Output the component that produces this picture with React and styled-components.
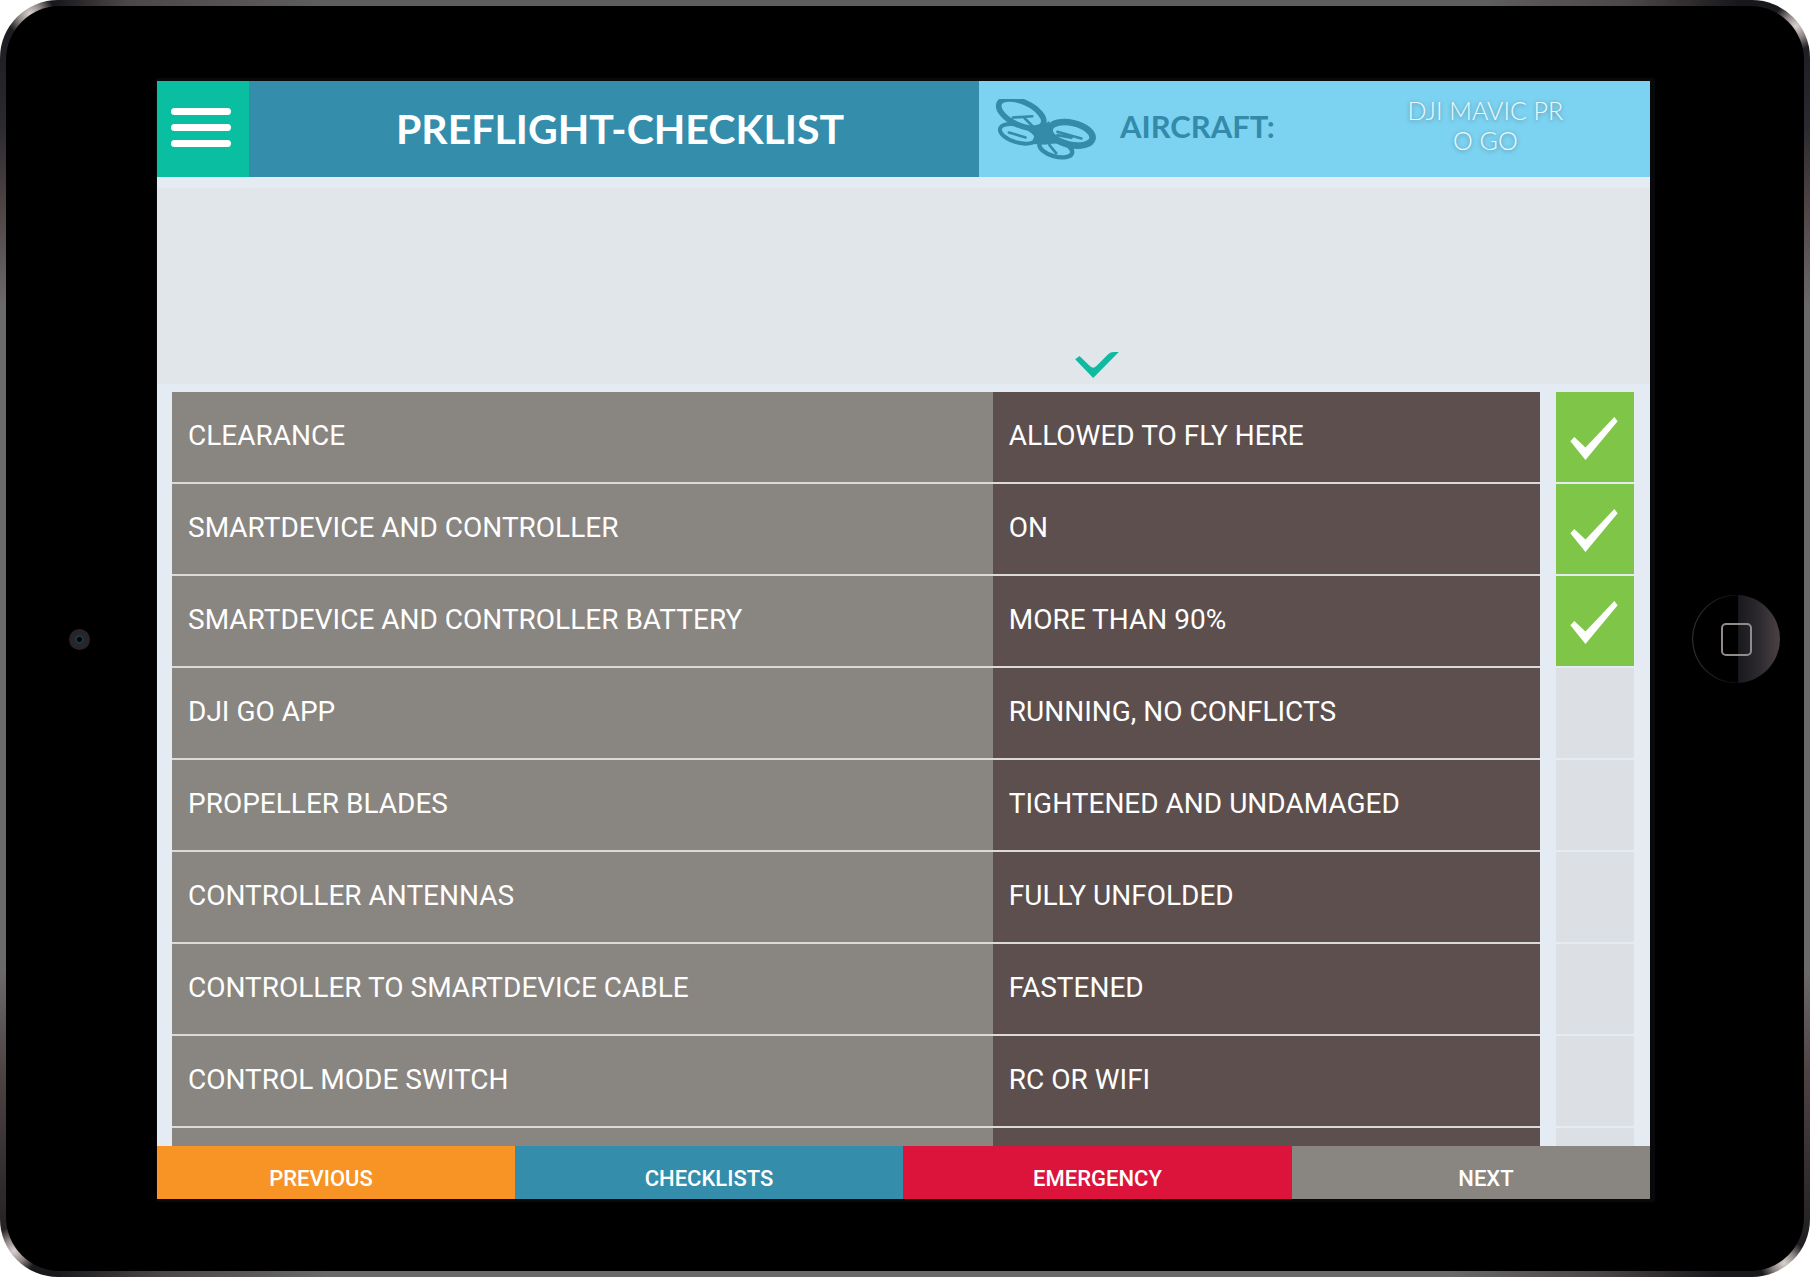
import React, { useState } from "react";
import styled, { createGlobalStyle } from "styled-components";

const GlobalStyle = createGlobalStyle`
  * {
    box-sizing: border-box;
  }

  body {
    margin: 0;
    background: #ffffff;
    font-family: Roboto, "Liberation Sans", sans-serif;
  }

  button {
    margin: 0;
    padding: 0;
    border: 0;
    font: inherit;
    color: inherit;
    cursor: pointer;
  }
`;

const Device = styled.div`
  display: flex;
  height: 100vh;
  padding: 6px;
  border-radius: 58px;
  background:
    radial-gradient(circle at 30px 14px, #d8d2d0 0, #8d8684 12px, transparent 24px),
    radial-gradient(circle at calc(100% - 14px) 26px, #d8d2d0 0, #8d8684 12px, transparent 24px),
    radial-gradient(circle at 14px calc(100% - 26px), #d8d2d0 0, #8d8684 12px, transparent 24px),
    radial-gradient(circle at calc(100% - 26px) calc(100% - 14px), #d8d2d0 0, #8d8684 12px, transparent 24px),
    linear-gradient(90deg, #18171c 3%, #4d4646 7%, #5f5d60 18%, #5f5d60 82%, #4d4646 90%, #18171c 96%) top / 100% 6px no-repeat,
    linear-gradient(90deg, #18171c 3%, #4d4646 9%, #69686b 18%, #69686b 80%, #4d4646 88%, #18171c 95%) bottom / 100% 6px no-repeat,
    linear-gradient(180deg, #18171c 0, #2c2a30 10%, #4d4343 16%, #6c696b 24%, #6c696b 76%, #4d4343 84%, #18171c 100%);
`;

const Bezel = styled.div`
  display: grid;
  grid-template-columns: 151px minmax(0, 1fr) 154px;
  flex: 1;
  min-width: 0;
  padding: 75px 0 72px;
  border-radius: 54px;
  background: #000000;
`;

const Side = styled.div`
  display: flex;
  align-items: center;
  justify-content: center;
`;

const LeftSide = styled(Side)`
  padding: 0 4px 2px 0;
`;

const RightSide = styled(Side)`
  padding: 0 0 2px 18px;
`;

const Camera = styled.div`
  width: 21px;
  height: 21px;
  border-radius: 50%;
  background: radial-gradient(
    circle,
    #000000 0 2px,
    #1d3a45 3px,
    #29262a 5px,
    #242226 100%
  );
`;

const HomeButton = styled.button`
  display: flex;
  align-items: center;
  justify-content: center;
  width: 88px;
  height: 88px;
  border-radius: 50%;
  box-shadow: inset 1px 0 1px #3a373b;
  background: linear-gradient(
    90deg,
    #000000 52%,
    #1a191e 53%,
    #2b292e 75%,
    #4b4143 100%
  );

  span {
    width: 31px;
    height: 33px;
    border: 2px solid #918b89;
    border-radius: 5px;
  }
`;

const Screen = styled.main`
  display: flex;
  flex-direction: column;
  min-height: 0;
  overflow: hidden;
  background: #e5ebf3;
  box-shadow: 2px 0 0 3px #09090c;
`;

const Header = styled.header`
  display: grid;
  grid-template-columns: 92px minmax(0, 730fr) minmax(0, 671fr);
  flex: none;
  min-height: 96px;
`;

const MenuButton = styled.button`
  display: flex;
  flex-direction: column;
  align-items: center;
  justify-content: center;
  gap: 9px;
  padding: 0 4px 4px 0;
  background: #0abfa1;

  span {
    width: 60px;
    height: 7px;
    border-radius: 4px;
    background: #ffffff;
  }
`;

const Title = styled.h1`
  display: flex;
  align-items: center;
  justify-content: center;
  margin: 0;
  padding: 0 0 2px 12px;
  background: #338dab;
  color: #ffffff;
  font-family: Lato, sans-serif;
  font-size: 41px;
  font-weight: 700;
`;

const Aircraft = styled.div`
  display: flex;
  align-items: center;
  padding-left: 16px;
  background: #7cd3f1;
  font-family: Lato, sans-serif;

  svg {
    flex: none;
    width: 101px;
    height: 61px;
  }
`;

const AircraftLabel = styled.span`
  margin-left: 24px;
  padding-bottom: 6px;
  color: #338aa9;
  font-size: 31px;
  font-weight: 700;
`;

const AircraftName = styled.span`
  flex: 1;
  padding: 0 0 8px 46px;
  color: #e8faff;
  font-size: 25px;
  font-weight: 300;
  line-height: 30px;
  text-align: center;
  text-shadow: 0 1px 4px rgba(60, 80, 95, 0.6);
`;

const Status = styled.section`
  display: flex;
  align-items: flex-end;
  flex: none;
  height: 196px;
  margin: 11px 0 8px;
  padding: 0 0 6px 61.5%;
  background: #e1e6ea;

  svg {
    width: 44px;
    height: 26px;
  }
`;

const List = styled.div`
  flex: 1;
  min-height: 0;
  padding: 0 16px 0 15px;
  overflow: auto;
  scrollbar-width: none;
`;

const Table = styled.table`
  width: 100%;
  table-layout: fixed;
  border-spacing: 0;
  color: #ffffff;
  font-size: 28px;
  line-height: 36px;
  text-align: left;

  th,
  td {
    height: 92px;
    padding: 0 16px 2px;
    border-bottom: 2px solid #dcdad9;
    font-weight: 400;
    white-space: nowrap;
  }
`;

const ItemCol = styled.col`
  width: 60%;
`;

const TargetCol = styled.col`
  width: 40%;
`;

const TickCol = styled.col`
  width: 94px;
`;

const Item = styled.th`
  background: #898580;
`;

const Target = styled.td`
  background: #5d4f4d;
`;

const Tick = styled.td`
  && {
    padding: 0 0 0 16px;
    border-bottom-color: #e5ebf3;
  }
`;

const TickBox = styled.label`
  display: grid;
  place-items: center;
  height: 90px;
  background: ${({ $checked }) => ($checked ? "#7fc548" : "#dcdfe4")};
  cursor: pointer;

  input {
    grid-area: 1 / 1;
    width: 100%;
    height: 100%;
    margin: 0;
    appearance: none;
  }

  svg {
    grid-area: 1 / 1;
    width: 48px;
    height: 43px;
    margin: 2px 2px 0 0;
    pointer-events: none;
  }
`;

const Footer = styled.nav`
  display: grid;
  grid-template-columns: 358fr 388fr 389fr 358fr;
  flex: none;
  height: 53px;
`;

const FooterButton = styled.button`
  && {
    padding-top: 12px;
    background: ${({ $color }) => $color};
    color: #ffffff;
    font-size: 22px;
    font-weight: 500;
    line-height: 30px;
  }

  &&:first-child {
    padding-right: 30px;
  }

  &&:last-child {
    padding-left: 30px;
  }
`;

const ITEMS = [
  { name: "CLEARANCE", target: "ALLOWED TO FLY HERE", checked: true },
  { name: "SMARTDEVICE AND CONTROLLER", target: "ON", checked: true },
  {
    name: "SMARTDEVICE AND CONTROLLER BATTERY",
    target: "MORE THAN 90%",
    checked: true,
  },
  { name: "DJI GO APP", target: "RUNNING, NO CONFLICTS" },
  { name: "PROPELLER BLADES", target: "TIGHTENED AND UNDAMAGED" },
  { name: "CONTROLLER ANTENNAS", target: "FULLY UNFOLDED" },
  { name: "CONTROLLER TO SMARTDEVICE CABLE", target: "FASTENED" },
  { name: "CONTROL MODE SWITCH", target: "RC OR WIFI" },
  { name: "", target: "" },
];

const ACTIONS = [
  { label: "PREVIOUS", color: "#f79425" },
  { label: "CHECKLISTS", color: "#338dab" },
  { label: "EMERGENCY", color: "#dc143c" },
  { label: "NEXT", color: "#898580" },
];

function DroneIcon() {
  return (
    <svg viewBox="42 42 304 182" fill="none" stroke="#338aa9" aria-hidden="true">
      <ellipse
        cx="121"
        cy="85"
        rx="73"
        ry="35"
        strokeWidth="17"
        transform="rotate(25 121 85)"
      />
      <ellipse
        cx="271"
        cy="146"
        rx="66"
        ry="33"
        strokeWidth="20"
        transform="rotate(13 271 146)"
      />
      <ellipse
        cx="112"
        cy="146"
        rx="57"
        ry="26"
        strokeWidth="12"
        transform="rotate(16 112 146)"
      />
      <ellipse
        cx="225"
        cy="190"
        rx="51"
        ry="24"
        strokeWidth="13"
        transform="rotate(16 225 190)"
      />
      <path
        d="M152 126 L184 122 L205 108 L212 145 L236 174 L190 178 L152 176 L162 150Z"
        fill="#338aa9"
      />
      <path
        d="M96 97 L154 93 M130 98 L156 124 M206 180 L226 204"
        strokeWidth="8"
        strokeLinecap="round"
      />
      <path
        d="M230 140 L302 160 M230 150 L272 158 M84 142 L134 157"
        strokeWidth="8"
        strokeLinecap="round"
      />
    </svg>
  );
}

function TickIcon() {
  return (
    <svg viewBox="210 123 144 131" aria-hidden="true">
      <path
        d="M210 197 L222 184 L256 216 L344 123 L354 136 L256 254Z"
        fill="#ffffff"
      />
    </svg>
  );
}

function StatusIcon() {
  return (
    <svg viewBox="349 877 131 78" aria-hidden="true">
      <path
        d="M349 899 L362 889 L394 920 Q403 928 412 920 L448 884 Q455 877 464 877 L480 877 L403 955Z"
        fill="#10baa0"
      />
    </svg>
  );
}

function ChecklistRow({ name, target, checked, onToggle }) {
  return (
    <tr>
      <Item scope="row">{name}</Item>
      <Target>{target}</Target>
      <Tick>
        <TickBox $checked={checked}>
          <input
            type="checkbox"
            aria-label={name}
            checked={checked}
            onChange={onToggle}
          />
          {checked && <TickIcon />}
        </TickBox>
      </Tick>
    </tr>
  );
}

export default function App() {
  const [checks, setChecks] = useState(ITEMS.map((item) => !!item.checked));

  const toggle = (index) => {
    setChecks(checks.map((value, i) => (i === index ? !value : value)));
  };

  return (
    <>
      <GlobalStyle />
      <Device>
        <Bezel>
          <LeftSide>
            <Camera />
          </LeftSide>
          <Screen>
            <Header>
              <MenuButton aria-label="Menu">
                <span />
                <span />
                <span />
              </MenuButton>
              <Title>PREFLIGHT-CHECKLIST</Title>
              <Aircraft>
                <DroneIcon />
                <AircraftLabel>AIRCRAFT:</AircraftLabel>
                <AircraftName>
                  DJI MAVIC PR
                  <br />O GO
                </AircraftName>
              </Aircraft>
            </Header>
            <Status>
              <StatusIcon />
            </Status>
            <List>
              <Table>
                <colgroup>
                  <ItemCol />
                  <TargetCol />
                  <TickCol />
                </colgroup>
                <tbody>
                  {ITEMS.map((item, index) => (
                    <ChecklistRow
                      key={index}
                      name={item.name}
                      target={item.target}
                      checked={checks[index]}
                      onToggle={() => toggle(index)}
                    />
                  ))}
                </tbody>
              </Table>
            </List>
            <Footer>
              {ACTIONS.map(({ label, color }) => (
                <FooterButton key={label} $color={color}>
                  {label}
                </FooterButton>
              ))}
            </Footer>
          </Screen>
          <RightSide>
            <HomeButton aria-label="Home">
              <span />
            </HomeButton>
          </RightSide>
        </Bezel>
      </Device>
    </>
  );
}
